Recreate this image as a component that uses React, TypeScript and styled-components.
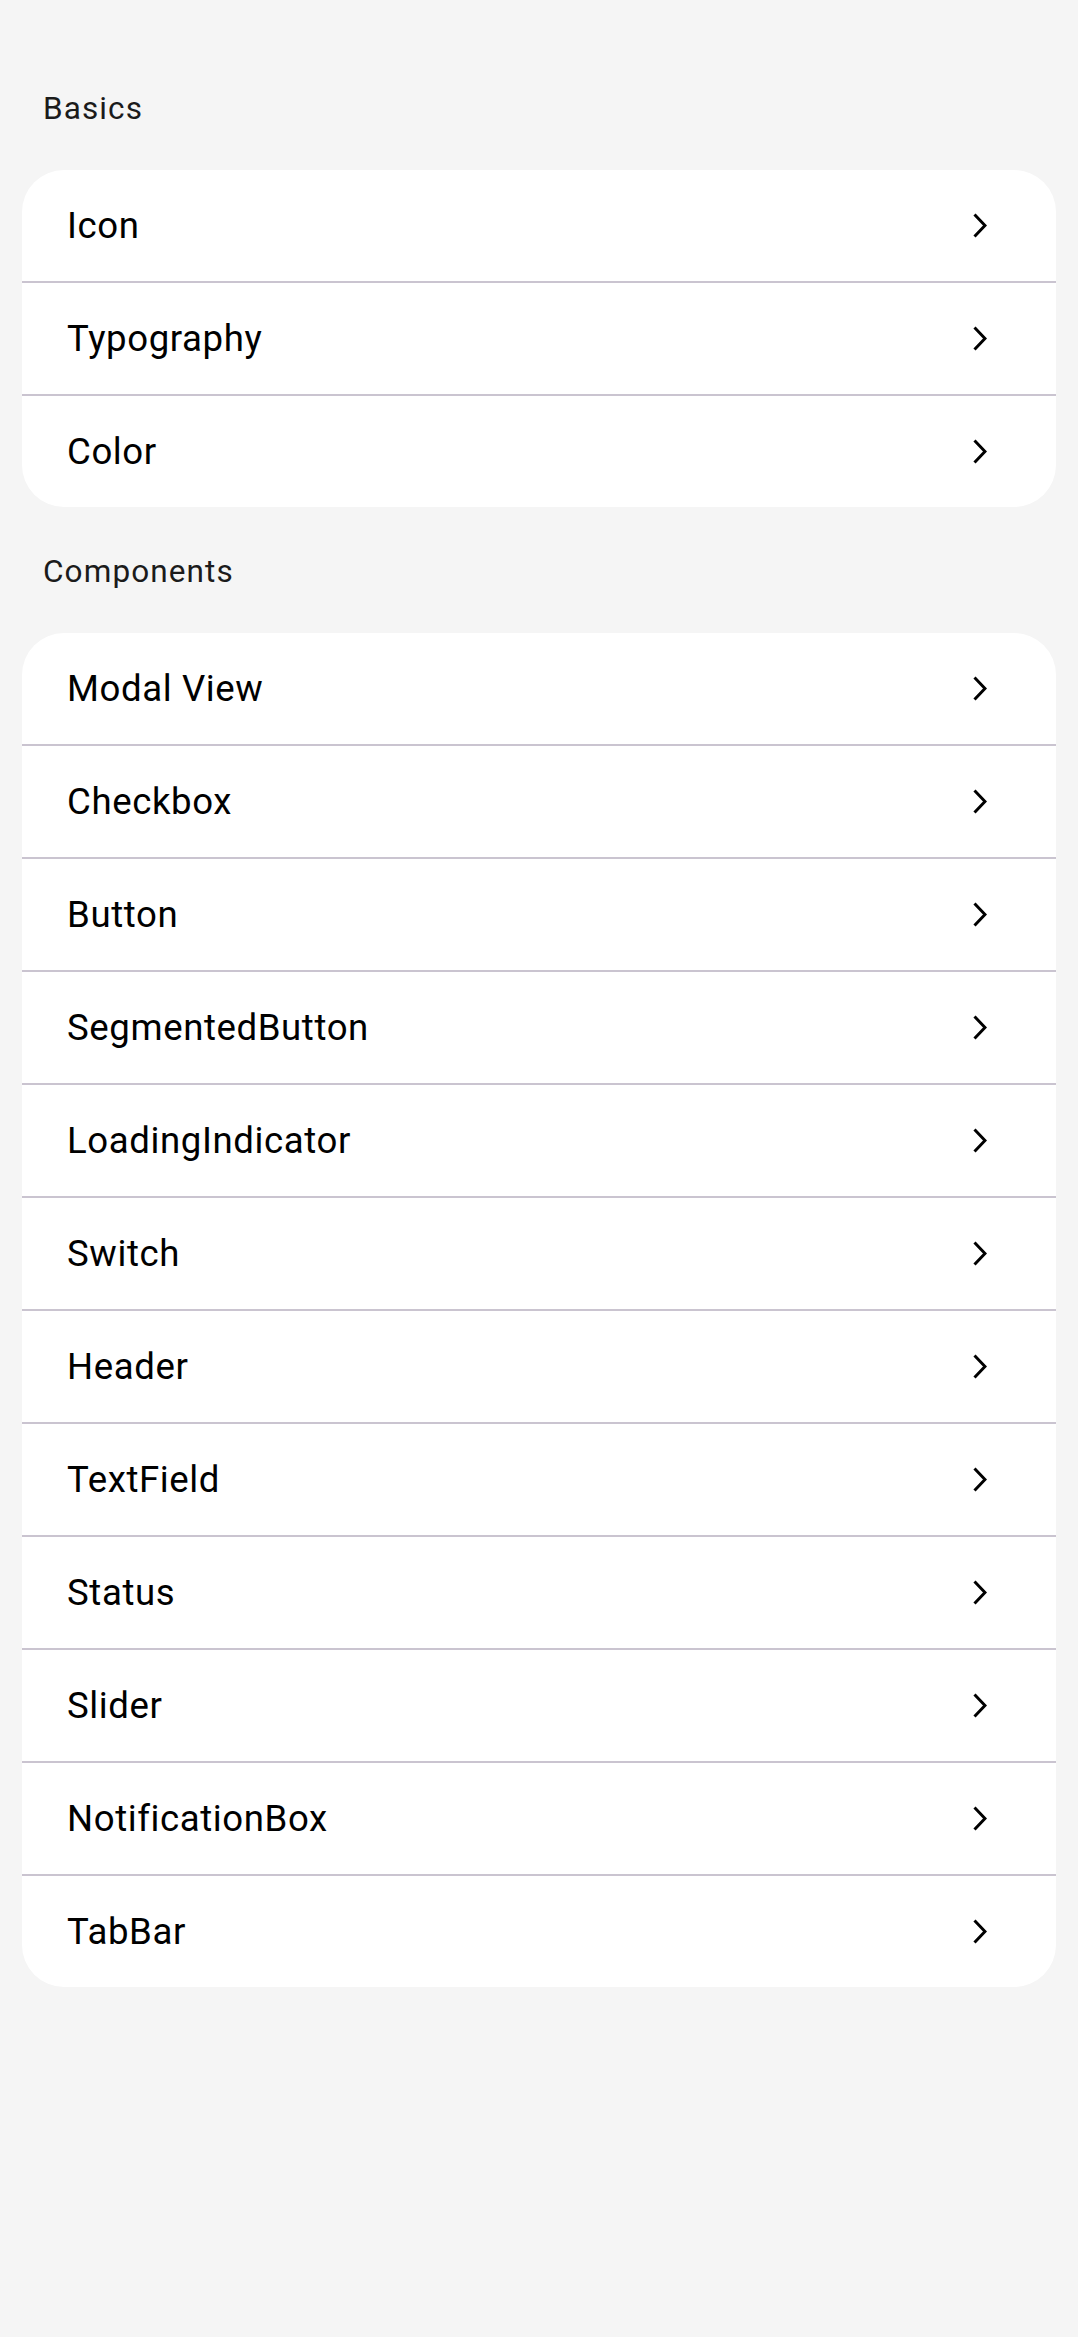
import React from 'react'
import styled, { createGlobalStyle } from 'styled-components'

const GlobalStyle = createGlobalStyle`
  html, body {
    margin: 0;
    padding: 0;
    background: #f5f5f5;
  }
  body {
    font-family: Roboto, "Noto Sans", "Liberation Sans", sans-serif;
    color: #000;
  }
`

const Page = styled.div`
  min-height: 2337px;
  box-sizing: border-box;
  padding-top: 44px;
  background: #f5f5f5;
`

const Section = styled.section`
  display: flex;
  flex-direction: column;
`

const SectionTitle = styled.h2`
  margin: 0;
  padding: 45.5px 0 43.5px 43px;
  font-size: 31.5px;
  font-weight: 400;
  line-height: 37px;
  letter-spacing: 1.1px;
  color: #1b1b1b;
`

const Card = styled.ul`
  list-style: none;
  margin: 0 22px;
  padding: 0;
  background: #fff;
  border-radius: 42px;
  overflow: hidden;
`

const Row = styled.li`
  display: flex;
  align-items: center;
  justify-content: space-between;
  height: 111px;
  padding: 0 69px 0 45px;
  font-size: 36.6px;
  line-height: 43px;
  letter-spacing: 0.6px;
  color: #000;

  &:not(:last-child) {
    border-bottom: 2px solid #cac4d0;
  }
`

const Chevron = styled.svg`
  width: 14px;
  height: 25px;
  flex-shrink: 0;
`

const ChevronRight = () => (
  <Chevron viewBox="0 0 14 25" fill="none">
    <polyline points="1.5,1.5 12,12.5 1.5,23.5" stroke="#000" strokeWidth="3" />
  </Chevron>
)

const sections = [
  { title: 'Basics', items: ['Icon', 'Typography', 'Color'] },
  {
    title: 'Components',
    items: [
      'Modal View',
      'Checkbox',
      'Button',
      'SegmentedButton',
      'LoadingIndicator',
      'Switch',
      'Header',
      'TextField',
      'Status',
      'Slider',
      'NotificationBox',
      'TabBar',
    ],
  },
]

const App = () => {
  return (
    <>
      <GlobalStyle />
      <Page>
        {sections.map((s) => (
          <Section key={s.title}>
            <SectionTitle>{s.title}</SectionTitle>
            <Card>
              {s.items.map((item) => (
                <Row key={item}>
                  <span>{item}</span>
                  <ChevronRight />
                </Row>
              ))}
            </Card>
          </Section>
        ))}
      </Page>
    </>
  )
}

export default App
